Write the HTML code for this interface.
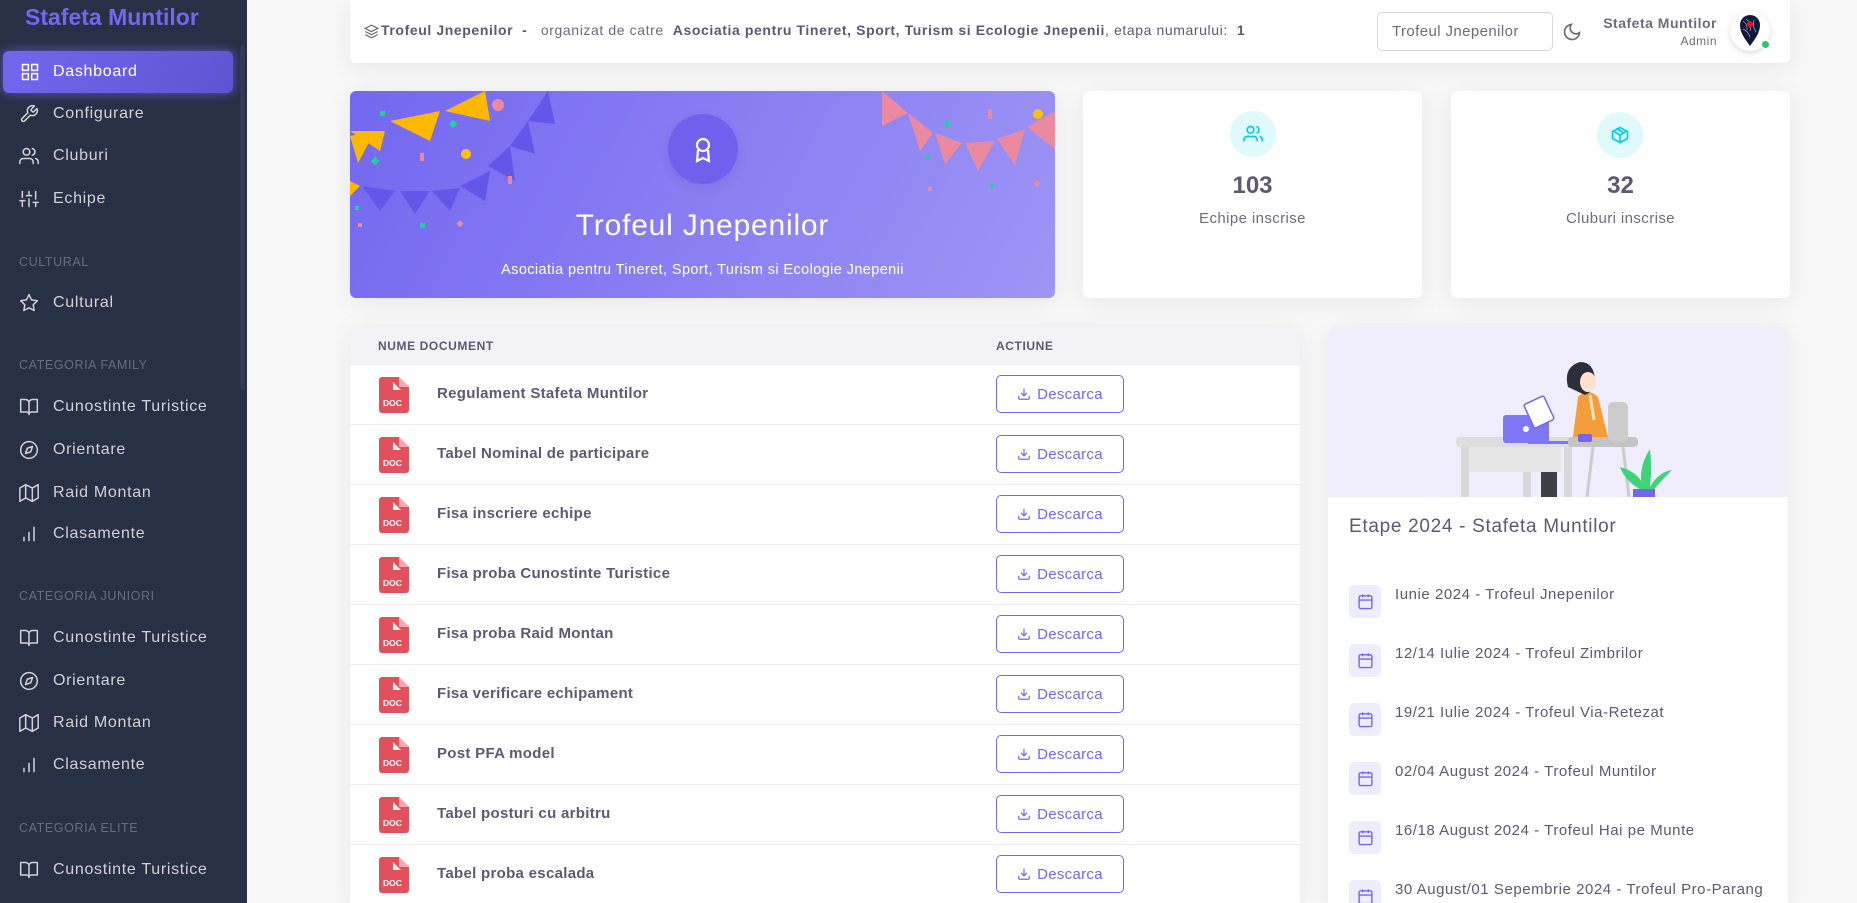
<!DOCTYPE html>
<html style="height:903px;overflow:hidden"><head><meta charset="utf-8">
<style>
*{box-sizing:border-box;margin:0;padding:0}
body{width:1857px;height:903px;overflow:hidden;background:#f8f8f8;font-family:"Liberation Sans",sans-serif;color:#5e5873;position:relative}
.sb{position:absolute;left:0;top:0;width:247px;height:903px;background:#283046}
.abs{position:absolute}
.brand{left:25px;top:4px;font-size:23px;font-weight:bold;color:#7367f0}
.mi{position:absolute;left:0;width:233px;height:42px;display:flex;align-items:center;font-size:16px;color:#d0d2d6;letter-spacing:.7px}
.mi svg{position:absolute;left:19px;width:20px;height:20px;fill:none;stroke:#d0d2d6;stroke-width:1.8;stroke-linecap:round;stroke-linejoin:round}
.mi span{position:absolute;left:53px}
.act{left:3px;width:230px;border-radius:6px;background:linear-gradient(118deg,#7367f0,#5e54cf);box-shadow:0 0 10px 1px rgba(115,103,240,.6);color:#fff}
.act svg{stroke:#fff;left:17px}
.act span{left:50px}
.sec{position:absolute;left:19px;font-size:12.5px;color:#676d7d;letter-spacing:.6px}
.card{position:absolute;background:#fff;border-radius:6px;box-shadow:0 4px 24px rgba(34,41,47,.08)}
.row{position:absolute;left:0;width:950px;height:60px;border-top:1px solid #ebe9f1}
.doc{position:absolute;left:29px;top:12px}
.dn{position:absolute;left:87px;top:20px;font-size:15px;font-weight:bold;color:#5e5873;letter-spacing:.3px}
.btn{position:absolute;left:646px;top:10px;width:128px;height:38px;border:1px solid #7367f0;border-radius:5px;color:#7367f0;font-size:15px;display:flex;align-items:center;justify-content:center;gap:6px;letter-spacing:.3px}
.cal{position:absolute;left:21px;width:32px;height:33px;background:#eeedfd;border-radius:5px;display:flex;align-items:center;justify-content:center}
.ct{position:absolute;left:67px;font-size:15px;color:#5e5873;letter-spacing:.55px}
</style></head><body>
<div class="sb">
<div class="abs brand">Stafeta Muntilor</div>
<div class="abs" style="left:240px;top:45px;width:5px;height:345px;background:#303a52;border-radius:3px"></div>
<div class="mi act" style="top:51px;height:42px"><svg viewBox="0 0 24 24"><rect x="3" y="3" width="7" height="7"/><rect x="14" y="3" width="7" height="7"/><rect x="3" y="14" width="7" height="7"/><rect x="14" y="14" width="7" height="7"/></svg><span>Dashboard</span></div>
<div class="mi" style="top:93px"><svg viewBox="0 0 24 24"><path d="M14.7 6.3a1 1 0 000 1.4l1.6 1.6a1 1 0 001.4 0l3.8-3.8a6 6 0 01-7.9 7.9l-6.9 6.9a2.1 2.1 0 01-3-3l6.9-6.9a6 6 0 017.9-7.9z"/></svg><span>Configurare</span></div>
<div class="mi" style="top:135px"><svg viewBox="0 0 24 24"><path d="M17 21v-2a4 4 0 00-4-4H5a4 4 0 00-4 4v2"/><circle cx="9" cy="7" r="4"/><path d="M23 21v-2a4 4 0 00-3-3.9M16 3.1a4 4 0 010 7.8"/></svg><span>Cluburi</span></div>
<div class="mi" style="top:178px"><svg viewBox="0 0 24 24"><path d="M4 21v-7M4 10V3M12 21v-9M12 8V3M20 21v-5M20 12V3M1 14h6M9 8h6M17 16h6"/></svg><span>Echipe</span></div>
<div class="sec" style="top:255px">CULTURAL</div>
<div class="mi" style="top:282px"><svg viewBox="0 0 24 24"><path d="M12 2l3.1 6.3 6.9 1-5 4.9 1.2 6.8L12 17.8 5.8 21l1.2-6.8-5-4.9 6.9-1z"/></svg><span>Cultural</span></div>
<div class="sec" style="top:358px">CATEGORIA FAMILY</div>
<div class="mi" style="top:386px"><svg viewBox="0 0 24 24"><path d="M2 3h6a4 4 0 014 4v14a3 3 0 00-3-3H2zM22 3h-6a4 4 0 00-4 4v14a3 3 0 013-3h7z"/></svg><span>Cunostinte Turistice</span></div>
<div class="mi" style="top:429px"><svg viewBox="0 0 24 24"><circle cx="12" cy="12" r="10"/><path d="M16.2 7.8l-2.1 6.3-6.3 2.1 2.1-6.3z"/></svg><span>Orientare</span></div>
<div class="mi" style="top:472px"><svg viewBox="0 0 24 24"><path d="M1 6v16l7-4 8 4 7-4V2l-7 4-8-4zM8 2v16M16 6v16"/></svg><span>Raid Montan</span></div>
<div class="mi" style="top:513px"><svg viewBox="0 0 24 24"><path d="M12 20V10M18 20V4M6 20v-4"/></svg><span>Clasamente</span></div>
<div class="sec" style="top:589px">CATEGORIA JUNIORI</div>
<div class="mi" style="top:617px"><svg viewBox="0 0 24 24"><path d="M2 3h6a4 4 0 014 4v14a3 3 0 00-3-3H2zM22 3h-6a4 4 0 00-4 4v14a3 3 0 013-3h7z"/></svg><span>Cunostinte Turistice</span></div>
<div class="mi" style="top:660px"><svg viewBox="0 0 24 24"><circle cx="12" cy="12" r="10"/><path d="M16.2 7.8l-2.1 6.3-6.3 2.1 2.1-6.3z"/></svg><span>Orientare</span></div>
<div class="mi" style="top:702px"><svg viewBox="0 0 24 24"><path d="M1 6v16l7-4 8 4 7-4V2l-7 4-8-4zM8 2v16M16 6v16"/></svg><span>Raid Montan</span></div>
<div class="mi" style="top:744px"><svg viewBox="0 0 24 24"><path d="M12 20V10M18 20V4M6 20v-4"/></svg><span>Clasamente</span></div>
<div class="sec" style="top:821px">CATEGORIA ELITE</div>
<div class="mi" style="top:849px"><svg viewBox="0 0 24 24"><path d="M2 3h6a4 4 0 014 4v14a3 3 0 00-3-3H2zM22 3h-6a4 4 0 00-4 4v14a3 3 0 013-3h7z"/></svg><span>Cunostinte Turistice</span></div>
</div>

<!-- header -->
<div class="card" style="left:350px;top:0;width:1440px;height:63px;border-radius:0 0 6px 6px">
<svg class="abs" style="left:14px;top:24px" width="15" height="15" viewBox="0 0 24 24" fill="none" stroke="#6e6b7b" stroke-width="2"><path d="M12 2L2 7l10 5 10-5zM2 17l10 5 10-5M2 12l10 5 10-5"/></svg>
<div class="abs" style="left:31px;top:22px;font-size:14px;color:#5e5873;white-space:nowrap;letter-spacing:.6px"><b>Trofeul Jnepenilor</b> &nbsp;<b>-</b> &nbsp; <span style="color:#6e6b7b">organizat de catre</span> &nbsp;<b>Asociatia pentru Tineret, Sport, Turism si Ecologie Jnepenii</b>, etapa numarului: &nbsp;<b>1</b></div>
<div class="abs" style="left:1027px;top:12px;width:176px;height:39px;border:1px solid #d8d6de;border-radius:5px;font-size:15px;color:#6e6b7b;padding:10px 0 0 14px;letter-spacing:.4px">Trofeul Jnepenilor</div>
<svg class="abs" style="left:1212px;top:22px" width="20" height="20" viewBox="0 0 24 24" fill="none" stroke="#6e6b7b" stroke-width="2"><path d="M21 12.8A9 9 0 1111.2 3a7 7 0 009.8 9.8z"/></svg>
<div class="abs" style="right:73px;top:15px;font-size:14px;font-weight:bold;color:#6e6b7b;text-align:right;letter-spacing:.5px">Stafeta Muntilor<div style="font-size:12px;font-weight:normal;margin-top:3px">Admin</div></div>
<div class="abs" style="left:1380px;top:11px;width:40px;height:40px;border-radius:50%;background:#fff;box-shadow:0 2px 6px rgba(0,0,0,.15)"><svg width="40" height="40" viewBox="0 0 40 40"><path d="M20 35C15 28 10 22 10 14a10 10 0 0120 0c0 8-5 14-10 21z" fill="#10183a"/><path d="M13 10q5 3 4 9M16 8q6 4 4 12M24 9q-2 6 2 12M13 18q5 2 7 8" stroke="#aab" stroke-width=".7" fill="none"/><circle cx="20" cy="13" r="3" fill="#e8102a"/></svg><div class="abs" style="left:30px;top:28px;width:11px;height:11px;border-radius:50%;background:#28c76f;border:2px solid #fff"></div></div>
</div>

<!-- hero -->
<div class="card" style="left:350px;top:91px;width:705px;height:207px;background:linear-gradient(118deg,#7367f0,#9e95f5);overflow:hidden">
<svg class="abs" style="left:0;top:0" width="705" height="207">
<path d="M0 40 L35 40 L30 60 Z M40 30 L90 20 L80 50 Z M95 20 L135 0 L140 30 Z M20 65" fill="#ffb800"/>
<polygon points="0,45 25,40 8,72" fill="#ffb800"/>
<polygon points="12,95 45,100 30,120" fill="#6357ea"/><polygon points="50,100 80,100 65,123" fill="#6357ea"/><polygon points="82,100 110,97 100,120" fill="#6357ea"/><polygon points="110,95 140,80 135,110" fill="#6357ea"/><polygon points="138,75 160,55 165,90" fill="#6357ea"/><polygon points="160,55 178,30 185,63" fill="#6357ea"/><polygon points="178,30 198,0 205,33" fill="#6357ea"/>
<polygon points="0,90 10,95 0,105" fill="#ffb800"/>
<circle cx="148" cy="14" r="6" fill="#ea8aa0"/><circle cx="116" cy="63" r="5" fill="#ffc107"/>
<rect x="30" y="20" width="5" height="5" fill="#1cd3a0"/><rect x="100" y="30" width="6" height="6" fill="#1cd3a0" transform="rotate(45 103 33)"/><rect x="22" y="67" width="6" height="6" fill="#1cd3a0" transform="rotate(45 25 70)"/><rect x="70" y="132" width="5" height="5" fill="#1cd3a0"/><rect x="5" y="115" width="4" height="4" fill="#1cd3a0"/>
<rect x="70" y="62" width="4" height="8" fill="#ea8aa0"/><rect x="158" y="85" width="4" height="8" fill="#ea8aa0"/><rect x="108" y="130" width="5" height="5" fill="#ea8aa0" transform="rotate(45 110 132)"/><rect x="8" y="132" width="4" height="4" fill="#ea8aa0"/>
<polygon points="532,0 558,22 532,35" fill="#ea8aa0"/><polygon points="558,22 583,42 570,60" fill="#ea8aa0"/><polygon points="585,42 612,52 595,73" fill="#ea8aa0"/><polygon points="615,52 645,50 628,80" fill="#ea8aa0"/><polygon points="647,48 675,38 665,74" fill="#ea8aa0"/><polygon points="677,36 705,20 705,58" fill="#ea8aa0"/>
<circle cx="688" cy="23" r="5" fill="#ffc107"/><rect x="638" y="18" width="4" height="10" fill="#ea8aa0"/><rect x="595" y="30" width="5" height="5" fill="#1cd3a0" transform="rotate(45 597 32)"/><rect x="575" y="65" width="4" height="4" fill="#1cd3a0"/><rect x="640" y="93" width="4" height="4" fill="#1cd3a0"/><rect x="685" y="90" width="5" height="5" fill="#ea8aa0" transform="rotate(45 687 92)"/><rect x="578" y="96" width="4" height="4" fill="#ea8aa0"/>
</svg>
<div class="abs" style="left:318px;top:23px;width:70px;height:70px;border-radius:50%;background:#6f61ee;box-shadow:0 4px 12px rgba(0,0,0,.08)"><svg class="abs" style="left:24px;top:23px" width="22" height="26" viewBox="0 0 22 26" fill="none" stroke="#fff" stroke-width="2.2"><circle cx="11" cy="8" r="6"/><path d="M6 13l-1 11 6-3 6 3-1-11"/></svg></div>
<div class="abs" style="left:0;width:705px;top:118px;text-align:center;color:#fff;font-size:30px;letter-spacing:.8px">Trofeul Jnepenilor</div>
<div class="abs" style="left:0;width:705px;top:171px;text-align:center;color:#fff;font-size:14.5px;letter-spacing:.4px">Asociatia pentru Tineret, Sport, Turism si Ecologie Jnepenii</div>
</div>

<!-- stats -->
<div class="card" style="left:1083px;top:91px;width:339px;height:207px">
<div class="abs" style="left:147px;top:20px;width:46px;height:46px;border-radius:50%;background:#e0f9fc"><svg class="abs" style="left:13px;top:13px" width="20" height="20" viewBox="0 0 24 24" fill="none" stroke="#00cfe8" stroke-width="2"><path d="M17 21v-2a4 4 0 00-4-4H5a4 4 0 00-4 4v2"/><circle cx="9" cy="7" r="4"/><path d="M23 21v-2a4 4 0 00-3-3.9M16 3.1a4 4 0 010 7.8"/></svg></div>
<div class="abs" style="left:0;width:339px;top:81px;text-align:center;font-size:24px;font-weight:bold">103</div>
<div class="abs" style="left:0;width:339px;top:119px;text-align:center;font-size:15px;color:#6e6b7b;letter-spacing:.4px">Echipe inscrise</div>
</div>
<div class="card" style="left:1451px;top:91px;width:339px;height:207px">
<div class="abs" style="left:146px;top:21px;width:46px;height:46px;border-radius:50%;background:#e0f9fc"><svg class="abs" style="left:13px;top:13px" width="20" height="20" viewBox="0 0 24 24" fill="none" stroke="#00cfe8" stroke-width="2"><path d="M21 16V8l-9-5-9 5v8l9 5z"/><path d="M3.3 7L12 12l8.7-5M12 22V12M7.5 4.2l9 5.2"/></svg></div>
<div class="abs" style="left:0;width:339px;top:81px;text-align:center;font-size:24px;font-weight:bold">32</div>
<div class="abs" style="left:0;width:339px;top:119px;text-align:center;font-size:15px;color:#6e6b7b;letter-spacing:.4px">Cluburi inscrise</div>
</div>

<!-- table -->
<div class="card" style="left:350px;top:327px;width:950px;height:576px;overflow:hidden;border-radius:6px 6px 0 0">
<div class="abs" style="left:0;top:0;width:950px;height:37px;background:#f3f2f7"></div>
<div class="abs" style="left:28px;top:12px;font-size:12px;font-weight:bold;letter-spacing:.6px;color:#5e5873">NUME DOCUMENT</div>
<div class="abs" style="left:646px;top:12px;font-size:12px;font-weight:bold;letter-spacing:.6px;color:#5e5873">ACTIUNE</div>
<div id="rows"></div>
</div>

<!-- right card -->
<div class="card" style="left:1328px;top:327px;width:460px;height:576px;overflow:hidden;border-radius:6px 6px 0 0">
<div class="abs" style="left:0;top:0;width:460px;height:170px;background:#f0eefd"></div>
<svg class="abs" style="left:0;top:0" width="460" height="170">
<rect x="128" y="110" width="120" height="10" rx="4" fill="#ddd"/><rect x="240" y="110" width="70" height="10" rx="4" fill="#c4c4c4"/>
<rect x="133" y="120" width="100" height="25" fill="#e6e6e6"/><rect x="133" y="120" width="8" height="50" fill="#d8d8d8"/><rect x="195" y="145" width="8" height="25" fill="#d8d8d8"/><rect x="236" y="120" width="8" height="50" fill="#d8d8d8"/>
<rect x="280" y="75" width="20" height="40" rx="5" fill="#ccc"/><path d="M265 120l-6 50M295 120l6 50" stroke="#ccc" stroke-width="3"/>
<rect x="213" y="145" width="16" height="25" fill="#3e4046"/>
<path d="M250 70q10-10 20 0l10 40h-35z" fill="#f59d3a"/><path d="M262 68l4 25" stroke="#ffe7c0" stroke-width="3"/>
<path d="M240 60q-5-20 12-25q14 0 15 18q-2 12-10 15z" fill="#2b2f38"/><ellipse cx="260" cy="55" rx="8" ry="10" fill="#ffe1cf"/>
<rect x="175" y="88" width="46" height="28" rx="3" fill="#7b77f5"/><circle cx="198" cy="102" r="3" fill="#fff"/><rect x="200" y="114" width="40" height="3" fill="#7b77f5"/>
<rect x="200" y="72" width="22" height="26" rx="2" fill="#fff" stroke="#7367f0" stroke-width="1.5" transform="rotate(-25 211 85)"/>
<rect x="250" y="107" width="14" height="8" rx="2" fill="#7367f0"/>
<path d="M317 170q-10-25 5-48q3 25-2 48zM317 165q-20-10-25-25q20 5 27 25zM319 165q10-20 25-22q-12 12-23 25z" fill="#3dd47a"/><rect x="305" y="162" width="22" height="10" fill="#7367f0"/>
</svg>
<div class="abs" style="left:21px;top:189px;font-size:19px;color:#5e5873;letter-spacing:.7px">Etape 2024 - Stafeta Muntilor</div>
<div id="cals"></div>
</div>

<script>
var docs=["Regulament Stafeta Muntilor","Tabel Nominal de participare","Fisa inscriere echipe","Fisa proba Cunostinte Turistice","Fisa proba Raid Montan","Fisa verificare echipament","Post PFA model","Tabel posturi cu arbitru","Tabel proba escalada"];
var h="";docs.forEach(function(d,i){h+='<div class="row" style="top:'+(37+i*60)+'px"><svg class="doc" width="30" height="36" viewBox="0 0 30 36"><path d="M3 0h17l10 10v23a3 3 0 01-3 3H3a3 3 0 01-3-3V3a3 3 0 013-3z" fill="#e2505b"/><path d="M20 0v10h10z" fill="#f4a7ad"/><path d="M14 5v8h8" fill="#fff" opacity=".9"/><text x="4" y="29" font-family="Liberation Sans" font-weight="bold" font-size="8.5" fill="#fff">DOC</text></svg><div class="dn">'+d+'</div><div class="btn"><svg width="14" height="14" viewBox="0 0 24 24" fill="none" stroke="#7367f0" stroke-width="2"><path d="M21 15v4a2 2 0 01-2 2H5a2 2 0 01-2-2v-4M7 10l5 5 5-5M12 15V3"/></svg>Descarca</div></div>';});
document.getElementById("rows").innerHTML=h;
var c=["Iunie 2024 - Trofeul Jnepenilor","12/14 Iulie 2024 - Trofeul Zimbrilor","19/21 Iulie 2024 - Trofeul Via-Retezat","02/04 August 2024 - Trofeul Muntilor","16/18 August 2024 - Trofeul Hai pe Munte","30 August/01 Sepembrie 2024 - Trofeul Pro-Parang"];
h="";c.forEach(function(t,i){var y=258+i*59;h+='<div class="cal" style="top:'+y+'px"><svg width="17" height="17" viewBox="0 0 24 24" fill="none" stroke="#7367f0" stroke-width="2"><rect x="3" y="4" width="18" height="18" rx="2"/><path d="M16 2v4M8 2v4M3 10h18"/></svg></div><div class="ct" style="top:'+(y+1)+'px">'+t+'</div>';});
document.getElementById("cals").innerHTML=h;
</script>
</body></html>
